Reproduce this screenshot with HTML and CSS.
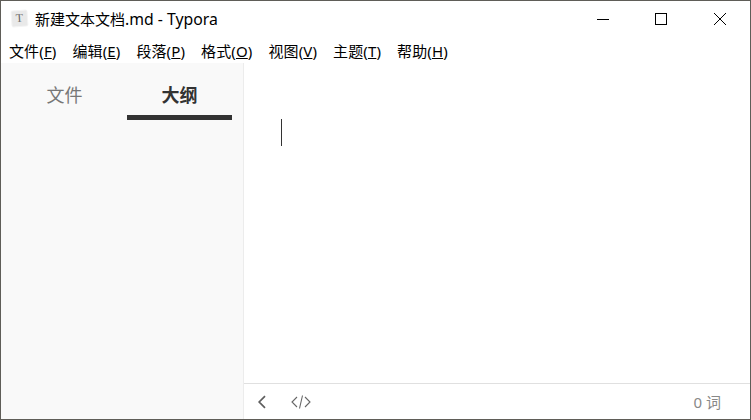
FILE: index.html
```html
<!DOCTYPE html>
<html lang="zh">
<head>
<meta charset="utf-8">
<title>新建文本文档.md - Typora</title>
<link rel="stylesheet" href="styles.css">
</head>
<body>
<div class="window">
  <header class="titlebar">
    <div class="app-icon"><span>T</span></div>
    <div class="title">新建文本文档<span class="ext">.md - Typora</span></div>
    <div class="controls">
      <button class="ctl"><svg width="12" height="12" viewBox="0 0 12 12"><path d="M0 6.5H12" stroke="#000" fill="none"/></svg></button>
      <button class="ctl"><svg width="12" height="12" viewBox="0 0 12 12"><rect x=".5" y=".5" width="11" height="11" stroke="#000" fill="none"/></svg></button>
      <button class="ctl"><svg width="12" height="12" viewBox="0 0 12 12"><path d="M0 0L12 12M12 0L0 12" stroke="#000" stroke-width="1" fill="none"/></svg></button>
    </div>
  </header>
  <nav class="menubar">
    <span class="menu">文件(<u>F</u>)</span>
    <span class="menu">编辑(<u>E</u>)</span>
    <span class="menu">段落(<u>P</u>)</span>
    <span class="menu">格式(<u>O</u>)</span>
    <span class="menu">视图(<u>V</u>)</span>
    <span class="menu">主题(<u>T</u>)</span>
    <span class="menu">帮助(<u>H</u>)</span>
  </nav>
  <div class="main">
    <aside class="sidebar">
      <div class="tabs">
        <div class="tab">文件</div>
        <div class="tab active">大纲</div>
      </div>
    </aside>
    <section class="content">
      <div class="editor"><div class="caret"></div></div>
      <footer class="status">
        <svg class="ic-back" width="10" height="14" viewBox="0 0 10 14"><path d="M8 1.2L2.2 7L8 12.8" stroke="#5e5e5e" stroke-width="1.7" fill="none"/></svg>
        <svg class="ic-code" width="20" height="14" viewBox="0 0 20 14"><path d="M6 2L1 7L6 12M14 2L19 7L14 12M11.5 .5L8.5 13.5" stroke="#666" stroke-width="1.1" fill="none"/></svg>
        <span class="count">0 词</span>
      </footer>
    </section>
  </div>
</div>
</body>
</html>
```
FILE: styles.css
```css
* { box-sizing: border-box; }
html, body { margin: 0; padding: 0; background: #fff; }
body { font-family: "Noto Sans", "Noto Sans CJK SC", sans-serif; overflow: hidden; }
.window {
  width: 751px; height: 420px;
  display: flex; flex-direction: column;
  border: 1px solid #5f5d58;
  background: #fff;
}
.titlebar { height: 37px; flex: none; display: flex; align-items: center; padding: 0 0 2px 10px; }
.app-icon {
  width: 17px; height: 17px;
  background: #e9e9e9;
  border: 1px solid #f4f4f4;
  border-radius: 2px;
  transform: rotate(-4deg);
  display: flex; align-items: center; justify-content: center;
}
.app-icon span { font: 12px "Liberation Serif", serif; color: #666; }
.title { margin-left: 7px; font-size: 15px; line-height: 20px; color: #000; }
.ext { font-size: 15.8px; }
.controls { margin-left: auto; display: flex; margin-right: 1px; }
.ctl {
  width: 58.5px; height: 35px; padding: 0; border: 0; background: none;
  display: flex; align-items: center; justify-content: center;
}
.menubar { height: 25px; flex: none; display: flex; gap: 16px; padding-left: 8px; align-items: center; }
.menu { font-size: 15px; line-height: 20px; letter-spacing: .12px; color: #000; white-space: nowrap; }
.main { flex: 1; display: flex; min-height: 0; }
.sidebar { width: 243px; flex: none; background: #f9f9f9; border-right: 1px solid #ececec; }
.tabs { display: flex; padding: 0 11px 0 11px; }
.tab {
  width: 105px; height: 57px;
  font-size: 18px; line-height: 24px; padding-top: 20px;
  text-align: center; color: #777;
  border-bottom: 5px solid transparent;
}
.tab.active { margin-left: 10px; font-weight: 700; color: #333; border-bottom-color: #333; }
.content { flex: 1; display: flex; flex-direction: column; min-width: 0; }
.editor { flex: 1; padding: 56px 0 0 37px; }
.caret { width: 1px; height: 27px; background: #333; }
.status {
  height: 36px; flex: none;
  border-top: 1px solid #e0e0e0;
  display: flex; align-items: center;
  padding: 0 29px 0 13px;
}
.ic-code { margin-left: 24px; }
.count { margin-left: auto; font-size: 15px; color: #888; }
```
